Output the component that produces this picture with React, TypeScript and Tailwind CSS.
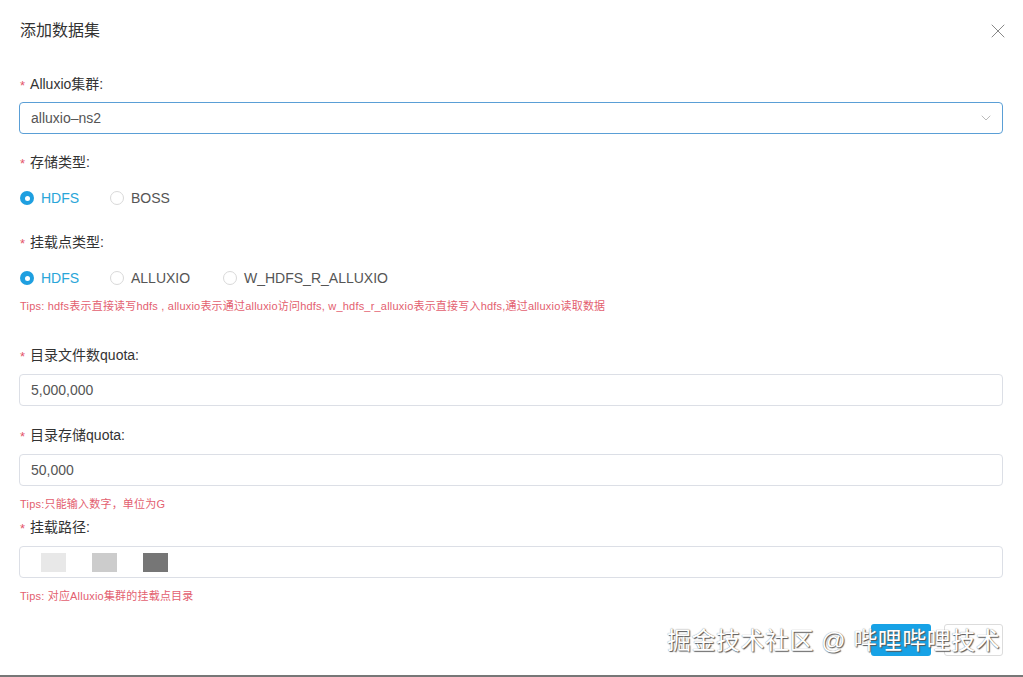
import { X, ChevronDown } from 'lucide-react';

const font = { fontFamily: '"Liberation Sans", "Noto Sans CJK SC", sans-serif' };

function Label({ text }: { text: string }) {
  return (
    <div className="h-5 flex items-center text-[14px] text-[#333]">
      <span className="text-[#e4556b] mr-[5px] text-[13px] leading-none pt-[3px]">*</span>
      <span>{text}</span>
    </div>
  );
}

function Radio({ label, checked, width }: { label: string; checked?: boolean; width: string }) {
  return (
    <div className={`flex items-center ${width}`}>
      {checked ? (
        <span className="w-[14px] h-[14px] rounded-full bg-[#1e9fe0] flex items-center justify-center">
          <span className="w-[5px] h-[5px] rounded-full bg-white" />
        </span>
      ) : (
        <span className="w-[14px] h-[14px] rounded-full border border-[#d9d9d9] bg-white" />
      )}
      <span className={`ml-[7px] text-[14px] ${checked ? 'text-[#2aa6d9]' : 'text-[#555]'}`}>{label}</span>
    </div>
  );
}

function Tips({ text }: { text: string }) {
  return <div className="h-4 flex items-center text-[11px] tracking-[0.2px] text-[#e3606f]">{text}</div>;
}

function Input({ value }: { value: string }) {
  return (
    <div className="h-8 border border-[#dcdfe6] rounded-[4px] flex items-center px-[11px] text-[14px] text-[#555]">
      {value}
    </div>
  );
}

export default function App() {
  return (
    <div className="w-[1023px] h-[677px] bg-white relative overflow-hidden border-b-2 border-[#777]" style={font}>
      <div className="flex items-center justify-between pl-5 pr-[13px] pt-5 h-[41px]">
        <span className="text-[16px] text-[#333]">添加数据集</span>
        <X className="w-6 h-6 text-[#888]" strokeWidth={1} />
      </div>

      <div className="flex flex-col pl-[19px] pr-5 pt-[33px]">
        <div className="pl-px"><Label text="Alluxio集群:" /></div>
        <div className="mt-2 h-8 border border-[#5a9fd6] rounded-[4px] flex items-center justify-between pl-[11px] pr-[8px] text-[14px] text-[#555]">
          <span>alluxio–ns2</span>
          <ChevronDown className="w-[16px] h-[16px] text-[#aaa]" strokeWidth={1.2} />
        </div>

        <div className="mt-[18px] pl-px"><Label text="存储类型:" /></div>
        <div className="mt-[10px] h-8 flex items-center pl-px">
          <Radio label="HDFS" checked width="w-[90px]" />
          <Radio label="BOSS" width="w-[100px]" />
        </div>

        <div className="mt-[18px] pl-px"><Label text="挂载点类型:" /></div>
        <div className="mt-[10px] h-8 flex items-center pl-px">
          <Radio label="HDFS" checked width="w-[90px]" />
          <Radio label="ALLUXIO" width="w-[113px]" />
          <Radio label="W_HDFS_R_ALLUXIO" width="w-[200px]" />
        </div>
        <div className="mt-[4px] pl-px">
          <Tips text="Tips: hdfs表示直接读写hdfs , alluxio表示通过alluxio访问hdfs, w_hdfs_r_alluxio表示直接写入hdfs,通过alluxio读取数据" />
        </div>

        <div className="mt-[31px] pl-px"><Label text="目录文件数quota:" /></div>
        <div className="mt-[9px]"><Input value="5,000,000" /></div>

        <div className="mt-[19px] pl-px"><Label text="目录存储quota:" /></div>
        <div className="mt-[9px]"><Input value="50,000" /></div>
        <div className="mt-[10px] pl-px"><Tips text="Tips:只能输入数字，单位为G" /></div>

        <div className="mt-[5px] pl-px"><Label text="挂载路径:" /></div>
        <div className="mt-[9px] h-8 border border-[#dcdfe6] rounded-[4px] flex items-center pl-[21px] gap-[26px]">
          <span className="w-[25px] h-[19px] bg-[#e8e8e8]" />
          <span className="w-[25px] h-[19px] bg-[#cccccc]" />
          <span className="w-[25px] h-[19px] bg-[#767676]" />
        </div>
        <div className="mt-[10px] pl-px"><Tips text="Tips: 对应Alluxio集群的挂载点目录" /></div>

        <div className="mt-[20px] flex justify-end gap-[13px]">
          <div className="w-[60px] h-8 rounded-[3px] bg-[#17a2e6]" />
          <div className="w-[59px] h-8 rounded-[3px] border border-[#dcdcdc] bg-white" />
        </div>
      </div>

      <div
        className="absolute left-[667px] top-[625px] text-[24px] leading-8 text-white whitespace-nowrap tracking-[0.5px]"
        style={{ textShadow: '1px 1px 1px #555, 0 0 1px #777' }}
      >
        掘金技术社区 @ 哔哩哔哩技术
      </div>
    </div>
  );
}
